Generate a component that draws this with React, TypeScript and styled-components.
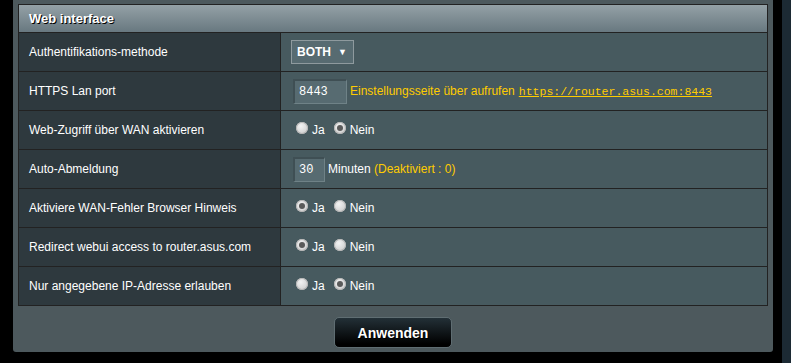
import styled, { createGlobalStyle } from 'styled-components';

const GlobalStyle = createGlobalStyle`
	html, body {
		margin: 0;
		padding: 0;
		background: #000;
		font-family: 'Liberation Sans', Arial, sans-serif;
		font-size: 12px;
		color: #fff;
	}
`;

const Page = styled.div`
	display: flex;
	height: 363px;
	width: 791px;
	overflow: hidden;
	background: #000;
`;

const Panel = styled.div`
	margin-left: 13px;
	width: 760px;
	height: 352px;
	box-sizing: border-box;
	padding: 4px 5px 0 5px;
	background: #4d595d;
	border-radius: 0 0 3px 3px;
	display: flex;
	flex-direction: column;
	align-items: center;
`;

const ScrollStrip = styled.div`
	margin-left: 9px;
	width: 9px;
	height: 363px;
	background: #1c2a34;
`;

const FormTable = styled.div`
	width: 750px;
	box-sizing: border-box;
	border: 1px solid #222;
	display: flex;
	flex-direction: column;
`;

const TableHead = styled.div`
	height: 28px;
	box-sizing: border-box;
	padding-left: 10px;
	display: flex;
	align-items: center;
	background: linear-gradient(#94a1a6, #687880);
	border-bottom: 1px solid #222;
	font-weight: bold;
	font-size: 13px;
	text-shadow: 1px 1px 0 #000;
`;

const Row = styled.div`
	display: grid;
	grid-template-columns: 262px 1fr;
	height: 39px;
	box-sizing: border-box;
	border-bottom: 1px solid #222;

	&:last-child {
		border-bottom: none;
		height: 38px;
	}
`;

const Label = styled.div`
	background: #2e393e;
	border-right: 1px solid #222;
	padding-left: 10px;
	display: flex;
	align-items: center;
`;

const Cell = styled.div`
	background: #475a5f;
	padding-left: 10px;
	display: flex;
	align-items: center;
`;

const Select = styled.div`
	width: 63px;
	height: 24px;
	box-sizing: border-box;
	border: 1px solid #8e9a9e;
	background: #576b71;
	display: flex;
	align-items: center;
	justify-content: space-between;
	padding: 0 6px 0 5px;
	font-weight: bold;
	font-size: 12px;
	margin-top: -1px;

	span {
		font-size: 9px;
	}
`;

const TextInput = styled.div<{ $w: number }>`
	width: ${p => p.$w}px;
	height: 25px;
	box-sizing: border-box;
	margin-left: 2px;
	border-top: 2px solid #3f4f54;
	border-left: 2px solid #3f4f54;
	border-right: 1px solid #6f8287;
	border-bottom: 1px solid #6f8287;
	background: #576b71;
	padding-left: 4px;
	display: flex;
	align-items: center;
	font-family: 'Liberation Mono', 'DejaVu Sans Mono', monospace;
	font-size: 12px;
	margin-right: 3px;
`;

const Hint = styled.span`
	color: #ffcc00;
`;

const Link = styled.span`
	color: #ffcc00;
	font-family: 'Liberation Mono', 'DejaVu Sans Mono', monospace;
	font-size: 11.5px;
	text-decoration: underline;
	margin-left: 4px;
`;

const RadioGroup = styled.div`
	display: flex;
	align-items: center;
	padding-left: 5px;
`;

const RadioDot = styled.span<{ $on: boolean }>`
	width: 12px;
	height: 12px;
	border-radius: 50%;
	box-sizing: border-box;
	background: radial-gradient(circle at 40% 35%, #f2f2f2, #c4c4c4);
	box-shadow: inset 0 0 0 1px #b5b5b5;
	position: relative;
	margin-top: -4px;

	&::after {
		content: '';
		display: ${p => (p.$on ? 'block' : 'none')};
		position: absolute;
		left: 3px;
		top: 3px;
		width: 6px;
		height: 6px;
		border-radius: 50%;
		background: #5a5a5a;
	}
`;

const RadioText = styled.span`
	margin: 0 9px 0 4px;
	font-size: 12px;
`;

const Footer = styled.div`
	margin-top: 11px;
`;

const ApplyButton = styled.div`
	width: 118px;
	height: 31px;
	box-sizing: border-box;
	border: 1px solid #5f6d72;
	border-radius: 5px;
	background: linear-gradient(#233037, #000 90%);
	display: flex;
	align-items: center;
	justify-content: center;
	font-weight: bold;
	font-size: 14px;
	text-shadow: 1px 1px 0 #000;
`;

const Radio = ({ value }: { value: boolean }) => (
	<RadioGroup>
		<RadioDot $on={value} />
		<RadioText>Ja</RadioText>
		<RadioDot $on={!value} />
		<RadioText>Nein</RadioText>
	</RadioGroup>
);

export default function App() {
	return (
		<>
			<GlobalStyle />
			<Page>
				<Panel>
					<FormTable>
						<TableHead>Web interface</TableHead>
						<Row>
							<Label>Authentifikations-methode</Label>
							<Cell>
								<Select>
									BOTH<span>▼</span>
								</Select>
							</Cell>
						</Row>
						<Row>
							<Label>HTTPS Lan port</Label>
							<Cell>
								<TextInput $w={54}>8443</TextInput>
								<Hint>Einstellungsseite über aufrufen</Hint>
								<Link>https://router.asus.com:8443</Link>
							</Cell>
						</Row>
						<Row>
							<Label>Web-Zugriff über WAN aktivieren</Label>
							<Cell>
								<Radio value={false} />
							</Cell>
						</Row>
						<Row>
							<Label>Auto-Abmeldung</Label>
							<Cell>
								<TextInput $w={32}>30</TextInput>
								<span>Minuten&nbsp;</span>
								<Hint>(Deaktiviert : 0)</Hint>
							</Cell>
						</Row>
						<Row>
							<Label>Aktiviere WAN-Fehler Browser Hinweis</Label>
							<Cell>
								<Radio value={true} />
							</Cell>
						</Row>
						<Row>
							<Label>Redirect webui access to router.asus.com</Label>
							<Cell>
								<Radio value={true} />
							</Cell>
						</Row>
						<Row>
							<Label>Nur angegebene IP-Adresse erlauben</Label>
							<Cell>
								<Radio value={false} />
							</Cell>
						</Row>
					</FormTable>
					<Footer>
						<ApplyButton>Anwenden</ApplyButton>
					</Footer>
				</Panel>
				<ScrollStrip />
			</Page>
		</>
	);
}
